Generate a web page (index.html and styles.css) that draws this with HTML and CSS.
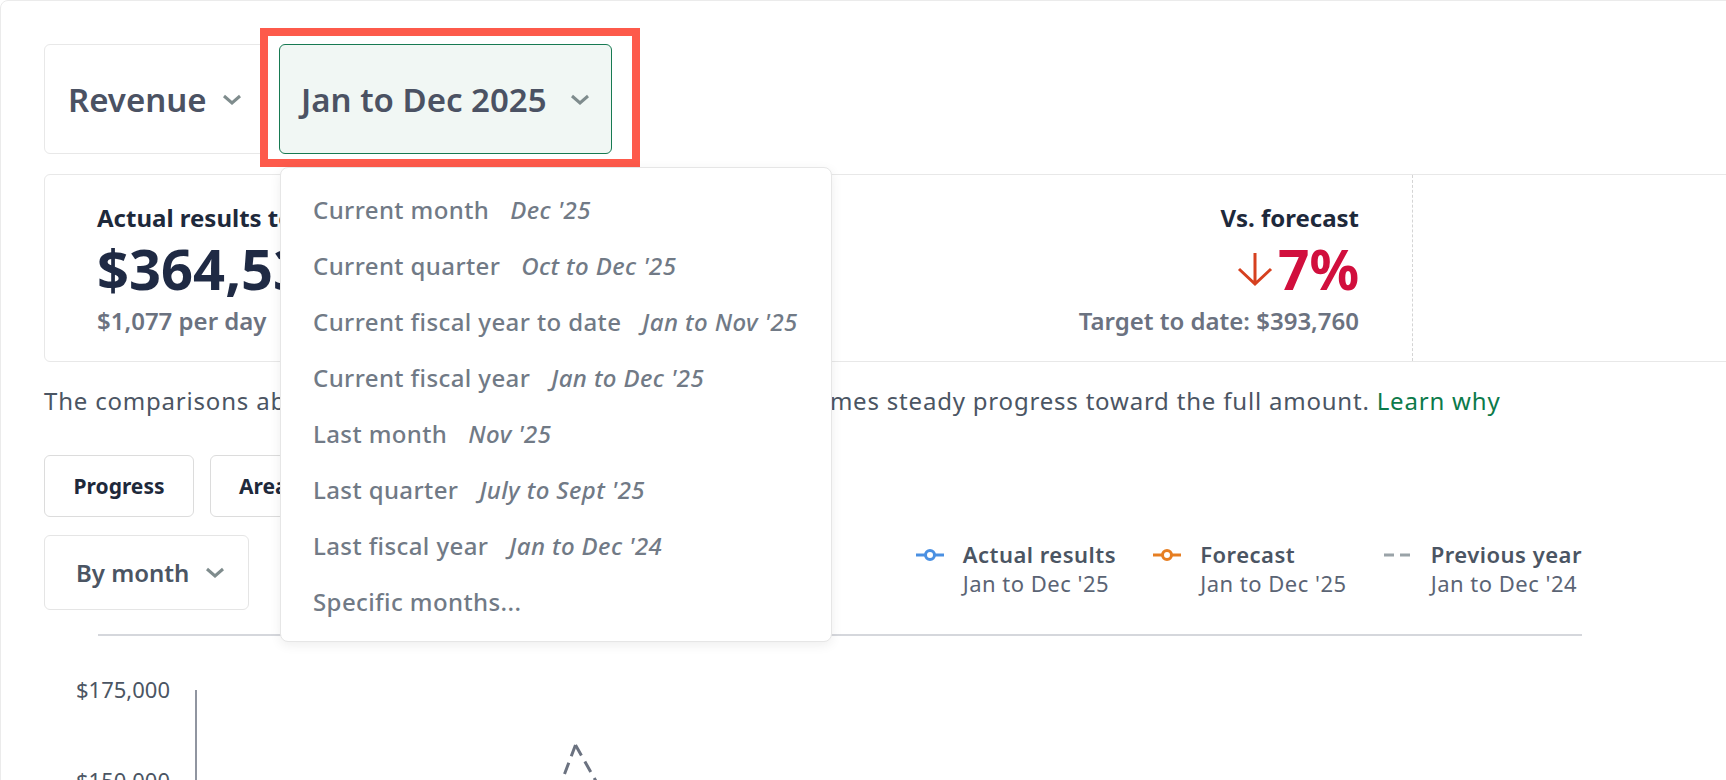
FILE: index.html
```html
<!DOCTYPE html>
<html lang="en">
<head>
<meta charset="utf-8">
<title>Revenue</title>
<link rel="stylesheet" href="styles.css">
</head>
<body>
<div class="panel">
  <div class="selectors">
    <div class="select metric">
      <span>Revenue</span>
      <svg class="chev" width="20" height="11" viewBox="0 0 20 11"><polyline points="2,2 10,9 18,2"/></svg>
    </div>
    <div class="period">
      <div class="select active">
        <span>Jan to Dec 2025</span>
        <svg class="chev" width="20" height="11" viewBox="0 0 20 11"><polyline points="2,2 10,9 18,2"/></svg>
      </div>
      <div class="highlight"></div>
      <div class="menu">
        <div class="menu-item"><span>Current month</span><em>Dec '25</em></div>
        <div class="menu-item"><span>Current quarter</span><em>Oct to Dec '25</em></div>
        <div class="menu-item"><span>Current fiscal year to date</span><em>Jan to Nov '25</em></div>
        <div class="menu-item"><span>Current fiscal year</span><em>Jan to Dec '25</em></div>
        <div class="menu-item"><span>Last month</span><em>Nov '25</em></div>
        <div class="menu-item"><span>Last quarter</span><em>July to Sept '25</em></div>
        <div class="menu-item"><span>Last fiscal year</span><em>Jan to Dec '24</em></div>
        <div class="menu-item"><span>Specific months...</span></div>
      </div>
    </div>
  </div>

  <div class="stats">
    <div class="stat stat-main">
      <div class="stat-label">Actual results to date</div>
      <div class="stat-value">$364,532</div>
      <div class="stat-sub">$1,077 per day</div>
    </div>
    <div class="stat stat-right">
      <div class="stat-label">Vs. forecast</div>
      <div class="stat-value down">
        <svg class="arrow" width="38" height="36" viewBox="0 0 38 36"><path d="M19 2 V33 M3 18 L19 33 L35 18"/></svg>
        <span>7%</span>
      </div>
      <div class="stat-sub">Target to date: $393,760</div>
    </div>
    <div class="stat stat-extra"></div>
  </div>

  <p class="note">The comparisons above use a prorated target to date, which assumes steady progress toward the full amount. <a class="link">Learn why</a></p>

  <div class="tabs">
    <div class="tab">Progress</div>
    <div class="tab tab-area">Area</div>
  </div>

  <div class="chart-head">
    <div class="bymonth">
      <span>By month</span>
      <svg class="chev" width="20" height="11" viewBox="0 0 20 11"><polyline points="2,2 10,9 18,2"/></svg>
    </div>
    <div class="legend">
      <div class="legend-item">
        <svg class="legend-icon" width="28" height="14" viewBox="0 0 28 14"><line x1="0" y1="7" x2="28" y2="7" stroke="#4a90e2" stroke-width="3"/><circle cx="14" cy="7" r="4.5" fill="#fff" stroke="#4a90e2" stroke-width="3"/></svg>
        <div class="legend-text"><div class="legend-title">Actual results</div><div class="legend-sub">Jan to Dec '25</div></div>
      </div>
      <div class="legend-item">
        <svg class="legend-icon" width="28" height="14" viewBox="0 0 28 14"><line x1="0" y1="7" x2="28" y2="7" stroke="#e67e22" stroke-width="3"/><circle cx="14" cy="7" r="4.5" fill="#fff" stroke="#e67e22" stroke-width="3"/></svg>
        <div class="legend-text"><div class="legend-title">Forecast</div><div class="legend-sub">Jan to Dec '25</div></div>
      </div>
      <div class="legend-item">
        <svg class="legend-icon" width="28" height="14" viewBox="0 0 28 14"><line x1="0" y1="7" x2="28" y2="7" stroke="#9aa3a8" stroke-width="3" stroke-dasharray="10 6"/></svg>
        <div class="legend-text"><div class="legend-title">Previous year</div><div class="legend-sub">Jan to Dec '24</div></div>
      </div>
    </div>
  </div>

  <div class="chart-rule"></div>

  <svg class="chart" width="1600" height="150" viewBox="0 0 1600 150">
    <text class="axis-label" x="126" y="62" text-anchor="end">$175,000</text>
    <text class="axis-label" x="126" y="153" text-anchor="end">$150,000</text>
    <line x1="152" y1="54" x2="152" y2="160" stroke="#6b7280" stroke-width="1.5"/>
    <path d="M531.5 109 L517.5 146" stroke="#6b7280" stroke-width="3" fill="none" stroke-dasharray="12 7"/>
    <path d="M531.5 109 L553 147" stroke="#6b7280" stroke-width="3" fill="none" stroke-dasharray="12 7"/>
  </svg>
</div>
</body>
</html>
```

FILE: styles.css
```css
html, body {
  margin: 0;
  padding: 0;
}

body {
  width: 1726px;
  height: 780px;
  overflow: hidden;
  background: #ffffff;
  font-family: "Noto Sans", "Lato", sans-serif;
}

.panel {
  box-sizing: border-box;
  width: 1800px;
  height: 820px;
  border: 1px solid #ebebeb;
  border-radius: 8px;
  padding: 43px 0 0 43px;
}

/* selectors */
.selectors {
  display: flex;
  gap: 12px;
}

.select {
  box-sizing: border-box;
  height: 110px;
  display: flex;
  align-items: center;
  justify-content: space-between;
  border: 1px solid #e8e8e8;
  border-radius: 6px;
  font-size: 33px;
  font-weight: 600;
  color: #4b5263;
  background: #fff;
  white-space: nowrap;
}

.select.metric {
  width: 223px;
  padding: 0 24px 0 23px;
}

.select.active {
  width: 333px;
  padding: 0 21px 0 21px;
  background: #f1f7f4;
  border-color: #177a52;
}

.chev {
  flex: none;
}

.chev polyline {
  fill: none;
  stroke: #7f8c8d;
  stroke-width: 3;
}

.period {
  position: relative;
}

.highlight {
  position: absolute;
  left: -19px;
  top: -16px;
  width: 380px;
  height: 139px;
  box-sizing: border-box;
  border: 8px solid #fd5a4b;
  pointer-events: none;
}

.menu {
  position: absolute;
  left: 1px;
  top: 123px;
  z-index: 2;
  box-sizing: border-box;
  width: 552px;
  height: 475px;
  padding: 13px 0 13px;
  background: #ffffff;
  border: 1px solid #e6e6e6;
  border-radius: 8px;
  box-shadow: 0 3px 12px rgba(0, 0, 0, 0.07);
}

.menu-item {
  height: 56px;
  display: flex;
  align-items: center;
  gap: 21px;
  padding-left: 32px;
  font-size: 24px;
  letter-spacing: 0.4px;
  font-weight: 500;
  color: #717a86;
  white-space: nowrap;
}

.menu-item em {
  font-style: italic;
  font-weight: 500;
}

/* stats card */
.stats {
  box-sizing: border-box;
  margin-top: 20px;
  width: 1770px;
  height: 188px;
  display: flex;
  border: 1px solid #e8e8e8;
  border-radius: 6px;
}

.stat {
  padding-top: 28px;
}

.stat-main {
  flex: 1;
  padding-left: 52px;
  white-space: nowrap;
}

.stat-right {
  padding-right: 53px;
  text-align: right;
  white-space: nowrap;
}

.stat-extra {
  flex: none;
  width: 400px;
  border-left: 1px dashed #d4d4d4;
}

.stat-label {
  font-size: 24px;
  line-height: 29px;
  font-weight: 700;
  color: #1e293b;
}

.stat-value {
  margin-top: 3px;
  font-size: 56px;
  line-height: 67px;
  font-weight: 700;
  color: #1f2a44;
}

.stat-value.down {
  display: flex;
  justify-content: flex-end;
  align-items: center;
  gap: 4px;
  font-size: 55px;
  color: #d10f3d;
}

.arrow path {
  fill: none;
  stroke: #d6401f;
  stroke-width: 3;
}

.stat-sub {
  margin-top: 4px;
  font-size: 24px;
  line-height: 29px;
  font-weight: 600;
  color: #6b7280;
}

/* note */
.note {
  margin: 25px 0 0;
  font-size: 24px;
  letter-spacing: 0.8px;
  line-height: 28px;
  color: #4b5563;
  white-space: nowrap;
}

.link {
  color: #0c7a4a;
}

/* tabs */
.tabs {
  margin-top: 40px;
  display: flex;
  gap: 16px;
}

.tab {
  box-sizing: border-box;
  width: 150px;
  height: 62px;
  display: flex;
  align-items: center;
  justify-content: center;
  border: 1px solid #dcdcdc;
  border-radius: 6px;
  font-size: 21px;
  font-weight: 700;
  color: #1e293b;
}

.tab-area {
  width: 160px;
  justify-content: flex-start;
  padding-left: 28px;
}

/* chart header */
.chart-head {
  margin-top: 18px;
  width: 1538px;
  display: flex;
  justify-content: space-between;
  align-items: flex-start;
}

.bymonth {
  box-sizing: border-box;
  width: 205px;
  height: 75px;
  display: flex;
  align-items: center;
  justify-content: space-between;
  padding: 0 23px 0 31px;
  border: 1px solid #e5e5e5;
  border-radius: 6px;
  font-size: 24px;
  font-weight: 600;
  color: #4b5563;
  white-space: nowrap;
}

.legend {
  margin-top: 5px;
  display: flex;
  gap: 37px;
}

.legend-item {
  display: flex;
  align-items: flex-start;
  gap: 19px;
}

.legend-icon {
  margin-top: 8px;
  flex: none;
}

.legend-title {
  font-size: 22px;
  letter-spacing: 0.5px;
  line-height: 29px;
  font-weight: 600;
  color: #4b5563;
  white-space: nowrap;
}

.legend-sub {
  font-size: 22px;
  letter-spacing: 0.5px;
  line-height: 29px;
  color: #5b6474;
  white-space: nowrap;
}

.chart-rule {
  margin-top: 24px;
  margin-left: 54px;
  width: 1484px;
  border-top: 2px solid #d5d7dc;
}

.chart {
  display: block;
  overflow: visible;
}

.axis-label {
  font-family: "Noto Sans", "Lato", sans-serif;
  font-size: 22px;
  fill: #4b5563;
}
```
